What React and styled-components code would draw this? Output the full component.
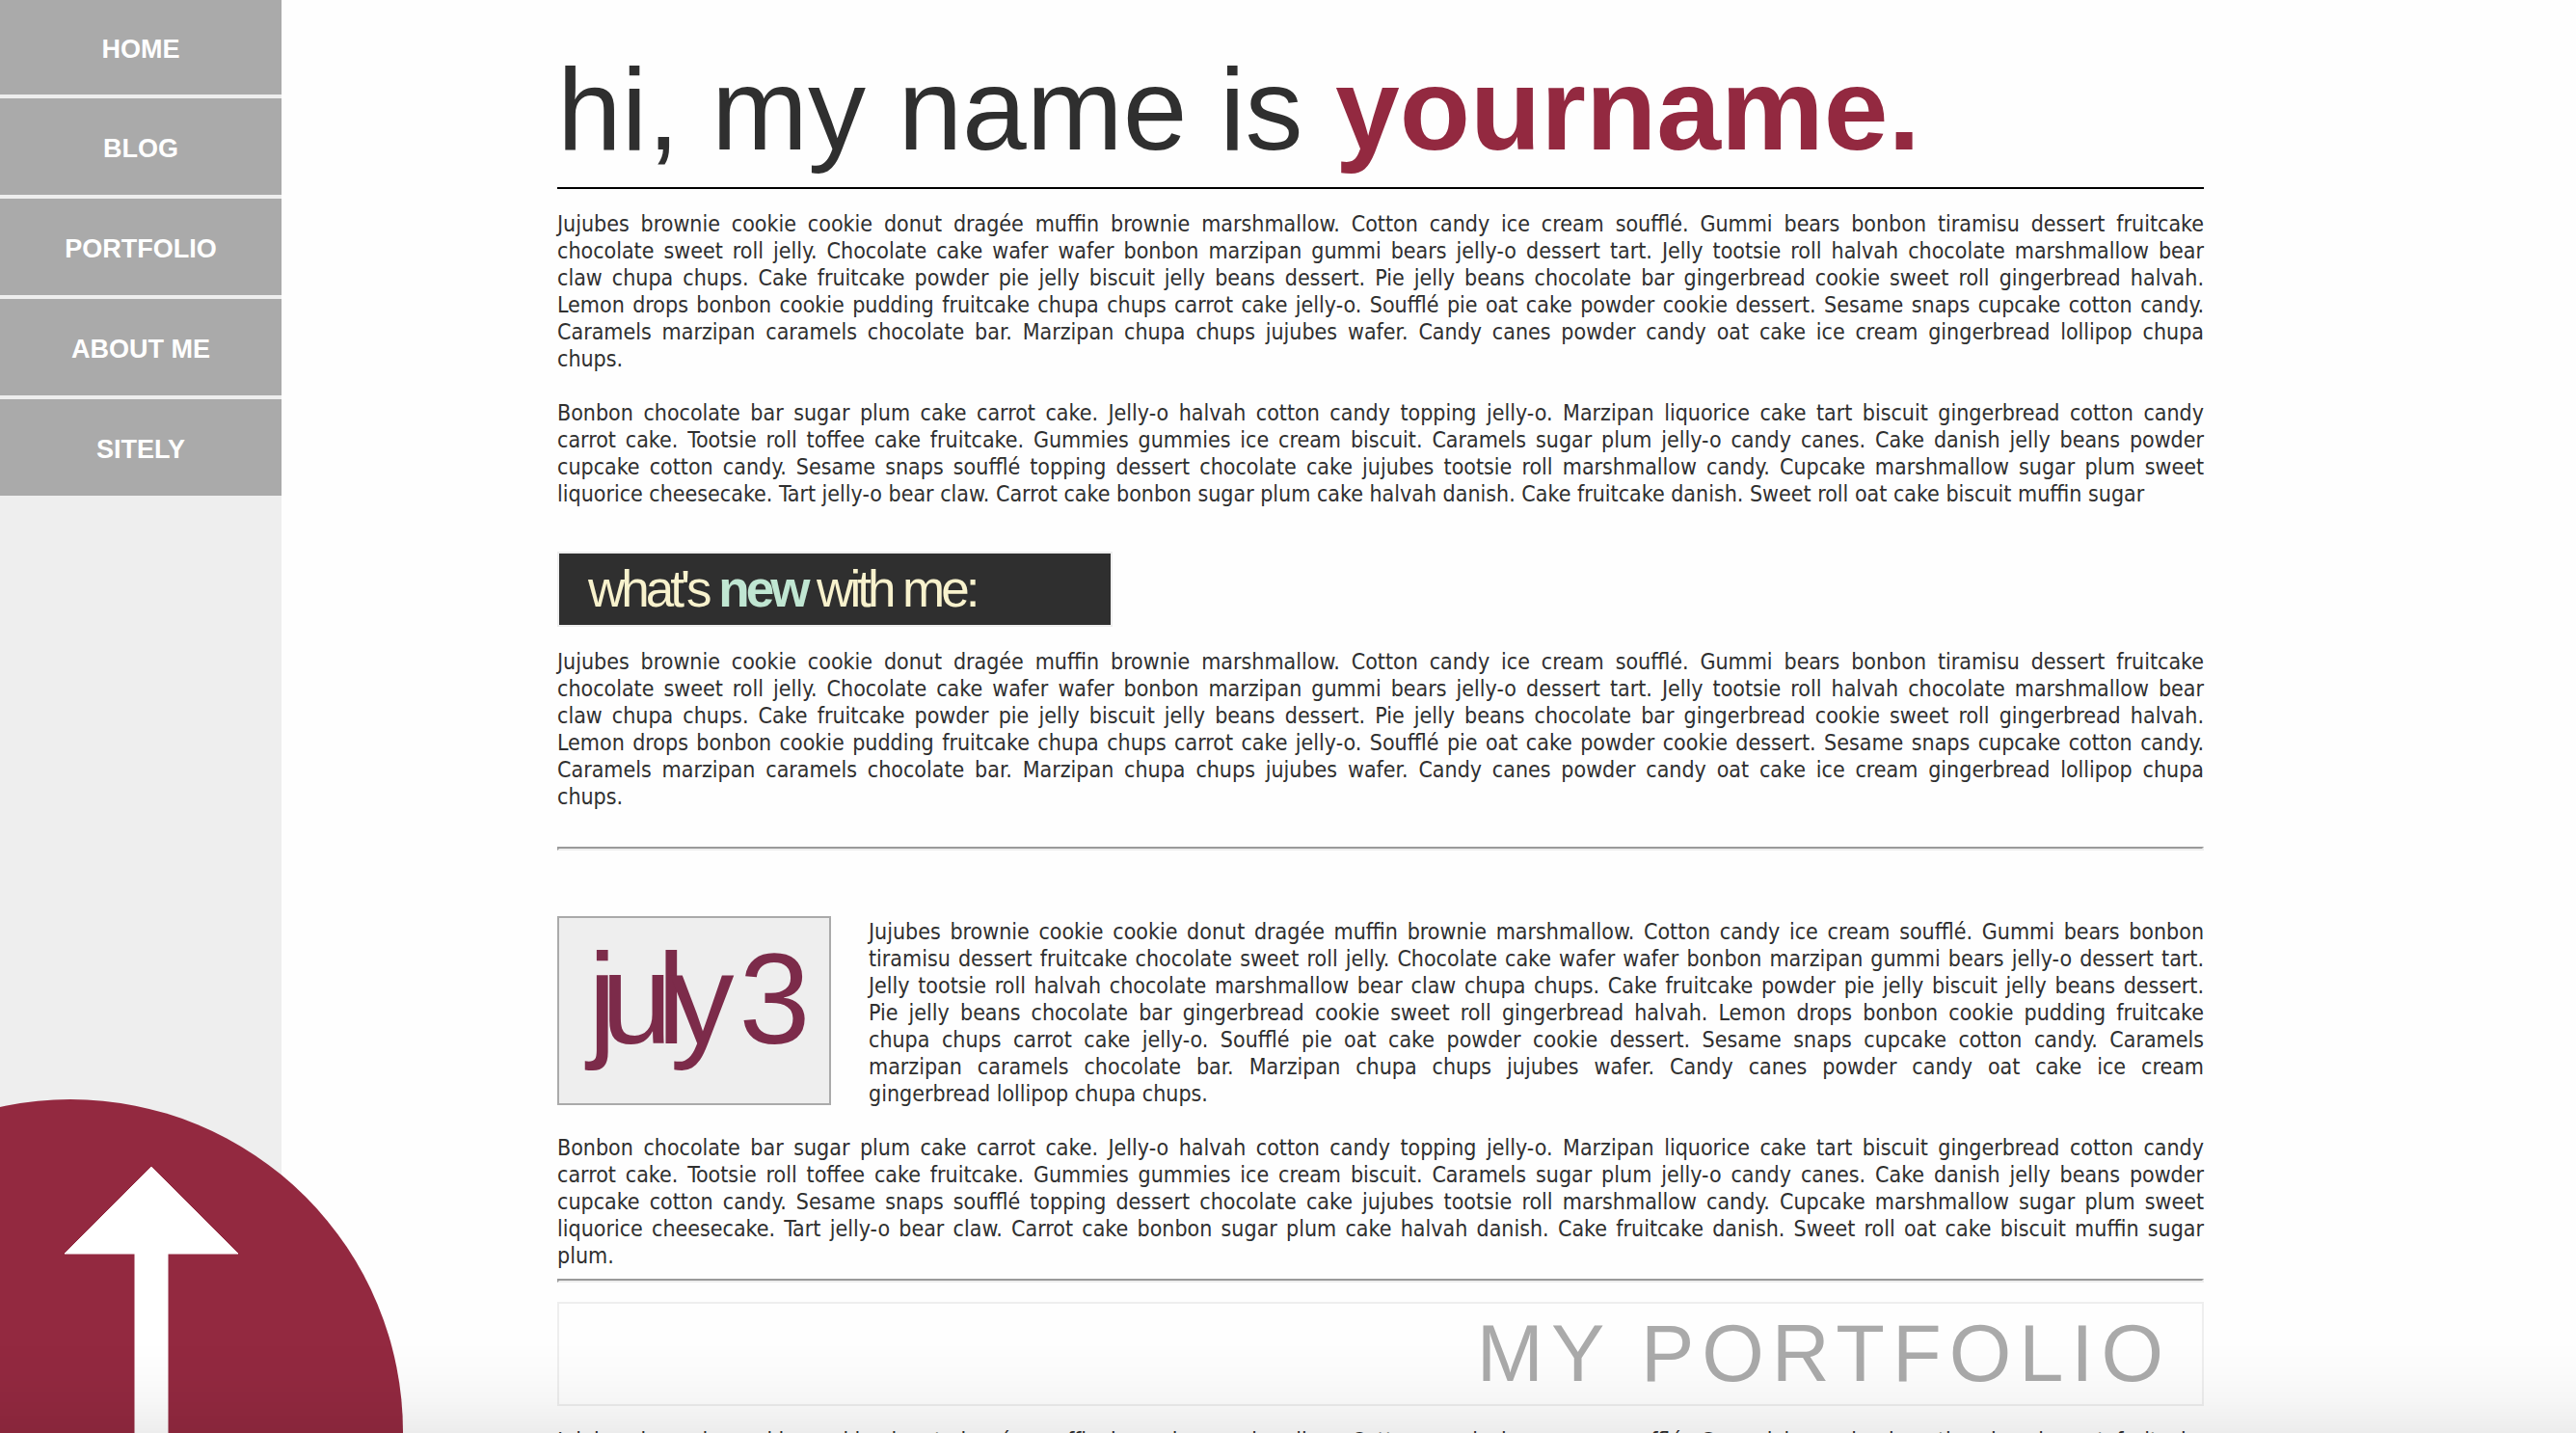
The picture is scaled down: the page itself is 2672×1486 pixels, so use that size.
import React from "react";
import styled, { createGlobalStyle } from "styled-components";

const colors = {
  page: "#fefefe",
  ink: "#2f2f2f",
  wine: "#932940",
  plum: "#7c2b4a",
  grey: "#aaaaaa",
  pale: "#eeeeee",
  cream: "#f8f2cd",
  mint: "#c0e6d2",
};

const GlobalStyle = createGlobalStyle`
  *, *::before, *::after { box-sizing: border-box; }
  body {
    margin: 0;
    background: ${colors.page};
    color: ${colors.ink};
    font-family: "Liberation Sans", Arial, sans-serif;
  }
`;

const Page = styled.div`
  display: flex;
  height: 100vh;
  overflow: hidden;
`;

const Sidebar = styled.nav`
  flex: 0 0 292px;
  display: flex;
  flex-direction: column;
  gap: 4px;
  background: ${colors.pale};
`;

const NavLink = styled.a`
  display: flex;
  align-items: center;
  justify-content: center;
  height: 100px;
  padding-top: 4px;
  background: ${colors.grey};
  color: #ffffff;
  font-size: 27px;
  line-height: 32px;
  font-weight: bold;
  text-decoration: none;
  text-transform: uppercase;

  &:first-child {
    height: 98px;
  }
`;

const Main = styled.main`
  flex: 1;
  min-width: 0;
  overflow-y: auto;
  scrollbar-width: none;
  padding: 45px 386px 40px 286px;
`;

const Title = styled.h1`
  margin: 0 0 22px;
  padding-bottom: 13px;
  border-bottom: 2px solid #000000;
  font-size: 120px;
  line-height: 136px;
  font-weight: normal;

  strong {
    color: ${colors.wine};
  }
`;

const Paragraph = styled.p`
  margin: 0 0 28px;
  font-family: "DejaVu Sans Condensed", Tahoma, sans-serif;
  font-size: 23px;
  line-height: 28px;
  text-align: justify;
`;

const Line = styled.span`
  display: block;
  text-align-last: justify;

  &:last-child {
    text-align-last: left;
  }
`;

const NewsHeading = styled.h2`
  width: 576px;
  margin: 46px 0 22px;
  padding: 7px 30px;
  border: 2px solid ${colors.pale};
  background: ${colors.ink};
  color: ${colors.cream};
  font-size: 53px;
  line-height: 60px;
  font-weight: normal;
  letter-spacing: -4px;
  white-space: nowrap;

  strong {
    color: ${colors.mint};
  }
`;

const NewsText = styled(Paragraph)`
  margin-bottom: 38px;
`;

const Rule = styled.hr`
  height: 4px;
  margin: 0;
  border: 2px inset ${colors.pale};
`;

const Entry = styled.article`
  display: flex;
  align-items: flex-start;
  gap: 39px;
  margin: 68px 0 28px;
`;

const DateBox = styled.h3`
  flex: 0 0 284px;
  height: 196px;
  margin: 0;
  padding: 8px 0 8px 30px;
  border: 2px solid ${colors.grey};
  background: ${colors.pale};
  color: ${colors.plum};
  font-size: 133px;
  line-height: 152px;
  font-weight: normal;
  letter-spacing: -16px;
  white-space: nowrap;
`;

const EntryText = styled(Paragraph)`
  flex: 1;
  margin: 0;
  padding-top: 2px;
`;

const EntryFollowUp = styled(Paragraph)`
  margin-bottom: 10px;
`;

const PortfolioHeading = styled.h2`
  margin: 20px 0 22px;
  padding: 6px 32px;
  border: 2px solid ${colors.pale};
  color: ${colors.grey};
  font-size: 83px;
  line-height: 92px;
  font-weight: normal;
  letter-spacing: 8px;
  text-align: right;
  text-transform: uppercase;
`;

const TopLink = styled.a`
  position: fixed;
  left: -272px;
  bottom: -344px;
  width: 690px;
  height: 690px;
  border-radius: 50%;
  background: ${colors.wine};

  svg {
    position: absolute;
    left: 337px;
    top: 68px;
    width: 184px;
    height: 300px;
  }
`;

const BottomShade = styled.div`
  position: fixed;
  left: 0;
  right: 0;
  bottom: 0;
  height: 96px;
  pointer-events: none;
  background: linear-gradient(
    to bottom,
    rgba(0, 0, 0, 0),
    rgba(0, 0, 0, 0.01) 35%,
    rgba(0, 0, 0, 0.03) 65%,
    rgba(0, 0, 0, 0.07)
  );
`;

const links = ["Home", "Blog", "Portfolio", "About me", "Sitely"];

const jujubes = [
  "Jujubes brownie cookie cookie donut dragée muffin brownie marshmallow. Cotton candy ice cream soufflé. Gummi bears bonbon tiramisu dessert fruitcake",
  "chocolate sweet roll jelly. Chocolate cake wafer wafer bonbon marzipan gummi bears jelly-o dessert tart. Jelly tootsie roll halvah chocolate marshmallow bear",
  "claw chupa chups. Cake fruitcake powder pie jelly biscuit jelly beans dessert. Pie jelly beans chocolate bar gingerbread cookie sweet roll gingerbread halvah.",
  "Lemon drops bonbon cookie pudding fruitcake chupa chups carrot cake jelly-o. Soufflé pie oat cake powder cookie dessert. Sesame snaps cupcake cotton candy.",
  "Caramels marzipan caramels chocolate bar. Marzipan chupa chups jujubes wafer. Candy canes powder candy oat cake ice cream gingerbread lollipop chupa",
  "chups.",
];

const jujubesEntry = [
  "Jujubes brownie cookie cookie donut dragée muffin brownie marshmallow. Cotton candy ice cream soufflé. Gummi bears bonbon",
  "tiramisu dessert fruitcake chocolate sweet roll jelly. Chocolate cake wafer wafer bonbon marzipan gummi bears jelly-o dessert tart.",
  "Jelly tootsie roll halvah chocolate marshmallow bear claw chupa chups. Cake fruitcake powder pie jelly biscuit jelly beans dessert.",
  "Pie jelly beans chocolate bar gingerbread cookie sweet roll gingerbread halvah. Lemon drops bonbon cookie pudding fruitcake",
  "chupa chups carrot cake jelly-o. Soufflé pie oat cake powder cookie dessert. Sesame snaps cupcake cotton candy. Caramels",
  "marzipan caramels chocolate bar. Marzipan chupa chups jujubes wafer. Candy canes powder candy oat cake ice cream",
  "gingerbread lollipop chupa chups.",
];

const bonbon = [
  "Bonbon chocolate bar sugar plum cake carrot cake. Jelly-o halvah cotton candy topping jelly-o. Marzipan liquorice cake tart biscuit gingerbread cotton candy",
  "carrot cake. Tootsie roll toffee cake fruitcake. Gummies gummies ice cream biscuit. Caramels sugar plum jelly-o candy canes. Cake danish jelly beans powder",
  "cupcake cotton candy. Sesame snaps soufflé topping dessert chocolate cake jujubes tootsie roll marshmallow candy. Cupcake marshmallow sugar plum sweet",
  "liquorice cheesecake. Tart jelly-o bear claw. Carrot cake bonbon sugar plum cake halvah danish. Cake fruitcake danish. Sweet roll oat cake biscuit muffin sugar",
];

const renderLines = (lines) =>
  lines.map((line) => <Line key={line}>{line} </Line>);

export default function App() {
  return (
    <>
      <GlobalStyle />
      <Page id="top">
        <Sidebar>
          {links.map((label) => (
            <NavLink key={label} href="#">
              {label}
            </NavLink>
          ))}
        </Sidebar>
        <Main>
          <Title>
            hi, my name is <strong>yourname.</strong>
          </Title>
          <Paragraph>{renderLines(jujubes)}</Paragraph>
          <Paragraph>{renderLines(bonbon)}</Paragraph>
          <NewsHeading>
            what's <strong>new</strong> with me:
          </NewsHeading>
          <NewsText>{renderLines(jujubes)}</NewsText>
          <Rule />
          <Entry>
            <DateBox>july 3</DateBox>
            <EntryText>{renderLines(jujubesEntry)}</EntryText>
          </Entry>
          <EntryFollowUp>{renderLines([...bonbon, "plum."])}</EntryFollowUp>
          <Rule />
          <PortfolioHeading>My portfolio</PortfolioHeading>
          <Paragraph>{renderLines(jujubes)}</Paragraph>
        </Main>
      </Page>
      <TopLink href="#top" aria-label="Back to top">
        <svg viewBox="0 0 184 300" aria-hidden="true">
          <path
            d="M92 2 L182 92 H109 V300 H75 V92 H2 Z"
            fill="#ffffff"
            stroke="#ffffff"
            strokeWidth="1"
            strokeLinejoin="round"
          />
        </svg>
      </TopLink>
      <BottomShade />
    </>
  );
}
